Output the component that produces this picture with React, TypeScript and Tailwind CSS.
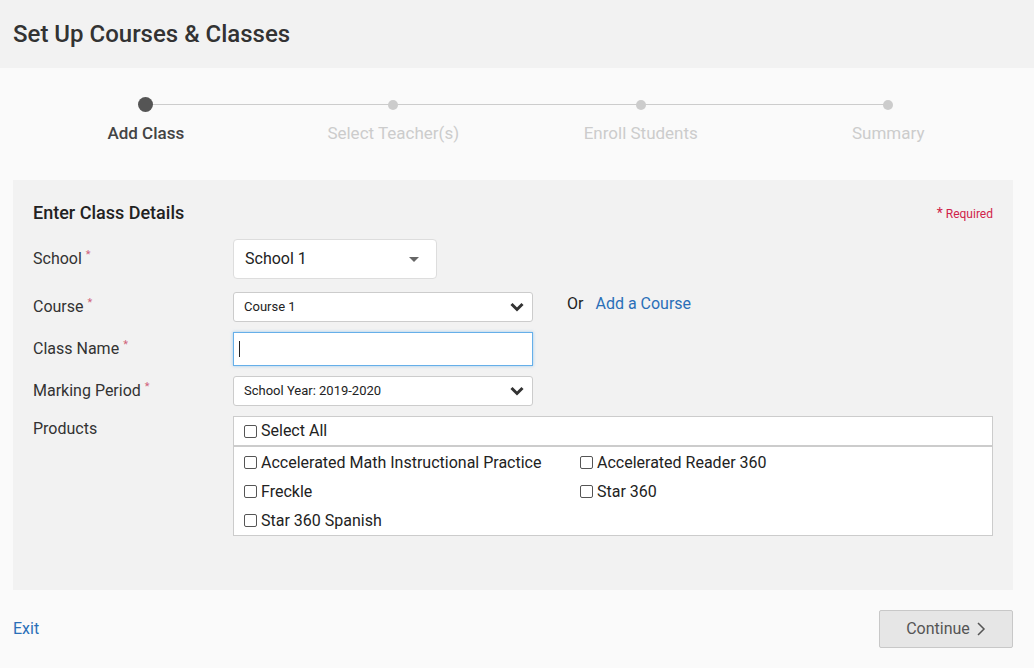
import React from 'react';

const steps = ['Add Class', 'Select Teacher(s)', 'Enroll Students', 'Summary'];

const Chevron = () => (
  <svg width="14" height="10" viewBox="0 0 14 10" className="text-[#333]">
    <path d="M1.5 2 L7 7.5 L12.5 2" fill="none" stroke="currentColor" strokeWidth="3" />
  </svg>
);

const Req = () => <span className="text-[#d0637a] text-[11px] ml-1 align-top">*</span>;

const Check = ({ label }: { label: string }) => (
  <label className="flex items-center gap-[4px] text-[16px] text-[#222] h-[29px]">
    <span className="w-[13px] h-[13px] border border-[#555] rounded-[2px] bg-white" />
    {label}
  </label>
);

export default function App() {
  return (
    <div className="w-[1034px] h-[668px] bg-[#fafafa] overflow-hidden" style={{ fontFamily: 'Roboto, "Liberation Sans", sans-serif' }}>
      <div className="h-[68px] bg-[#f2f2f2] flex items-center px-[13px]">
        <h1 className="text-[24px] font-medium text-[#333]">Set Up Courses &amp; Classes</h1>
      </div>

      {/* Stepper */}
      <div className="relative mx-[22px] h-[112px]">
        <div className="absolute left-[124px] right-[124px] top-[36px] h-px bg-[#ccc]" />
        <div className="grid grid-cols-4">
          {steps.map((s, i) => (
            <div key={s} className="flex flex-col items-center">
              <div className="h-[37px] flex items-end">
                <div className={i === 0 ? 'relative w-[15px] h-[15px] rounded-full bg-[#555] mb-[-7px]' : 'relative w-[10px] h-[10px] rounded-full bg-[#ccc] mb-[-5px]'} />
              </div>
              <div className={`mt-[16px] text-[17px] ${i === 0 ? 'font-medium text-[#444]' : 'text-[#ccc]'}`}>{s}</div>
            </div>
          ))}
        </div>
      </div>

      {/* Panel */}
      <div className="ml-[13px] mr-[21px] h-[410px] bg-[#f2f2f2] px-[20px] pt-[19px]">
        <div className="flex justify-between items-start">
          <h2 className="text-[18px] font-medium text-[#222]">Enter Class Details</h2>
          <span className="text-[12px] text-[#d0234a] mt-[4px]"><span className="text-[14px]">*</span> Required</span>
        </div>

        <div className="mt-[13px] flex items-center h-[40px]">
          <div className="w-[200px] text-[16px] text-[#333]">School<Req /></div>
          <div className="w-[204px] h-[40px] bg-white border border-[#ddd] rounded-[4px] flex items-center justify-between px-[11px]">
            <span className="text-[16px] text-[#222]">School 1</span>
            <span className="w-0 h-0 border-x-[5px] border-x-transparent border-t-[5px] border-t-[#666] mr-[6px]" />
          </div>
        </div>

        <div className="mt-[13px] flex items-center h-[30px]">
          <div className="w-[200px] text-[16px] text-[#333]">Course<Req /></div>
          <div className="w-[300px] h-[30px] bg-white border border-[#ccc] rounded-[3px] flex items-center justify-between pl-[10px] pr-[8px]">
            <span className="text-[13px] text-[#222]">Course 1</span>
            <Chevron />
          </div>
          <span className="ml-[34px] text-[16px] text-[#222] mb-[6px]">Or</span>
          <a className="ml-[12px] text-[16px] text-[#2a6fb8] mb-[6px]">Add a Course</a>
        </div>

        <div className="mt-[10px] flex items-center h-[34px]">
          <div className="w-[200px] text-[16px] text-[#333]">Class Name<Req /></div>
          <div className="w-[300px] h-[34px] bg-white border border-[#66afe9] shadow-[0_0_3px_rgba(102,175,233,0.6)] flex items-center pl-[5px]">
            <span className="w-px h-[16px] bg-[#222]" />
          </div>
        </div>

        <div className="mt-[10px] flex items-center h-[30px]">
          <div className="w-[200px] text-[16px] text-[#333]">Marking Period<Req /></div>
          <div className="w-[300px] h-[30px] bg-white border border-[#ccc] rounded-[3px] flex items-center justify-between pl-[10px] pr-[8px]">
            <span className="text-[13px] text-[#222]">School Year: 2019-2020</span>
            <Chevron />
          </div>
        </div>

        <div className="mt-[10px] flex items-start">
          <div className="w-[200px] text-[16px] text-[#333] pt-[1px]">Products</div>
          <div className="w-[760px] h-[120px] bg-white border border-[#ccc]">
            <div className="h-[30px] border-b-2 border-[#ccc] pl-[10px] flex items-center">
              <Check label="Select All" />
            </div>
            <div className="pl-[10px] pt-[1px] grid grid-cols-[336px_1fr]">
              <Check label="Accelerated Math Instructional Practice" />
              <Check label="Accelerated Reader 360" />
              <Check label="Freckle" />
              <Check label="Star 360" />
              <Check label="Star 360 Spanish" />
            </div>
          </div>
        </div>
      </div>

      <div className="ml-[13px] mr-[21px] mt-[20px] flex items-center justify-between">
        <a className="text-[16px] text-[#2a6fb8]">Exit</a>
        <button className="w-[134px] h-[38px] bg-[#e6e6e6] border border-[#c8c8c8] rounded-[2px] flex items-center justify-center gap-[6px] text-[16px] text-[#555]">
          Continue
          <svg width="10" height="16" viewBox="0 0 10 16"><path d="M2 2 L8 8 L2 14" fill="none" stroke="#555" strokeWidth="1.5" /></svg>
        </button>
      </div>
    </div>
  );
}
